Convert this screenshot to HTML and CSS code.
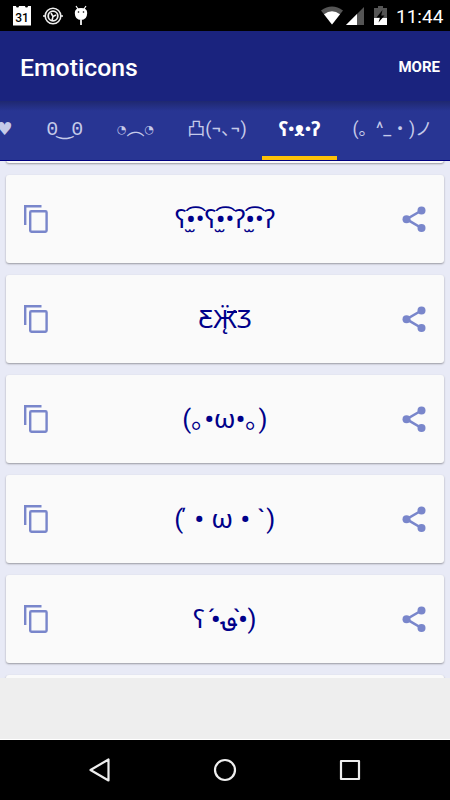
FILE: index.html
```html
<!DOCTYPE html>
<html lang="en">
<head>
    <meta charset="UTF-8">
    <meta name="viewport" content="width=device-width, initial-scale=1.0">
    <title>Emoticons</title>
    <link rel="stylesheet" href="styles.css">
</head>
<body>
    <svg width="0" height="0" class="defs">
        <symbol id="copy" viewBox="0 0 24 28">
            <path d="M1.2 20V1.2H17.5" fill="none" stroke="currentColor" stroke-width="2.4"/>
            <rect x="6.2" y="6.3" width="16.4" height="20.4" rx="1.2" fill="none" stroke="currentColor" stroke-width="2.4"/>
        </symbol>
        <symbol id="share" viewBox="0 0 24 26">
            <path d="M19.5 4.5L4.5 13.2l15 8.8" fill="none" stroke="currentColor" stroke-width="2.6"/>
            <circle cx="19.5" cy="4.5" r="4" fill="currentColor"/>
            <circle cx="4.5" cy="13.2" r="4" fill="currentColor"/>
            <circle cx="19.5" cy="22" r="4" fill="currentColor"/>
        </symbol>
    </svg>

    <div class="status-bar">
        <div class="notifications">
            <svg width="20" height="21" viewBox="0 0 20 21">
                <path d="M1 1h3a1.5 1.5 0 0 0 3 0h6a1.5 1.5 0 0 0 3 0h3v19.5H1z" fill="#fff"/>
                <text x="10" y="16.5" class="calendar-day">31</text>
            </svg>
            <svg width="20" height="20" viewBox="0 0 20 20" fill="none" stroke="#eee">
                <circle cx="10" cy="10" r="7.8" stroke-width="1.6"/>
                <circle cx="10" cy="10" r="4.8" stroke-width="1.8"/>
                <path d="M0 10h3M17 10h3M8 7l2 3.5M9 14.5l1-4 3-1.5" stroke-width="1.6"/>
            </svg>
            <svg width="14" height="21" viewBox="0 0 14 21">
                <path d="M2 1l2 3M12 1l-2 3" stroke="#fff" stroke-width="1.2"/>
                <path d="M.8 8Q.8 3 7 3t6.2 5Q13 15 7 15T.8 8z" fill="#fff"/>
                <path d="M7 15v5" stroke="#ddd" stroke-width="2"/>
                <circle cx="4.5" cy="7" r=".8"/><circle cx="9.5" cy="7" r=".8"/>
            </svg>
        </div>
        <div class="system">
            <svg width="22" height="19" viewBox="0 0 22 19">
                <path d="M0 4.5Q11-3.5 22 4.5L11 18.5z" fill="#555"/>
                <path d="M3 8.2Q11 2.2 19 8.2L11 18.5z" fill="#fff"/>
            </svg>
            <svg class="signal" width="18" height="18" viewBox="0 0 18 18">
                <path d="M0 18L18 0v18z" fill="#555"/>
                <path d="M0 18L11 7v11z" fill="#fff"/>
            </svg>
            <svg class="battery" width="13" height="19" viewBox="0 0 13 19">
                <path d="M0 2h4V0h5v2h4v10H0z" fill="#555"/>
                <path d="M0 12h13v7H0z" fill="#fff"/>
                <path d="M8.5 4L2.5 11.5H6L4.5 16.5l6-7H7.2z" fill="#000"/>
            </svg>
            <span class="clock">11:44</span>
        </div>
    </div>

    <header class="app-bar">
        <h1>Emoticons</h1>
        <span class="more">MORE</span>
    </header>

    <nav class="tabs">
        <a class="tab tab-love">♥</a>
        <a class="tab tab-happy">0‿0</a>
        <a class="tab tab-sad"><span class="eye">◔</span>︵<span class="eye">◔</span></a>
        <a class="tab tab-angry">凸(¬､¬)</a>
        <a class="tab tab-animals active">ʕ•ᴥ•ʔ</a>
        <a class="tab tab-other">(。^_・)ノ</a>
    </nav>

    <main class="list">
        <div class="card card-first"></div>
        <div class="card">
            <svg class="copy"><use href="#copy"/></svg>
            <span class="face">ʕ<span class="mark mouth">&nbsp;̫</span>•͡•ʕ<span class="mark mouth">&nbsp;̫</span>•͡•ʔ<span class="mark mouth">&nbsp;̫</span>•͡•ʔ</span>
            <svg class="share"><use href="#share"/></svg>
        </div>
        <div class="card">
            <svg class="copy"><use href="#copy"/></svg>
            <span class="face">Ƹ̵<span class="wing">Ӝ̨</span>Ʒ</span>
            <svg class="share"><use href="#share"/></svg>
        </div>
        <div class="card">
            <svg class="copy"><use href="#copy"/></svg>
            <span class="face puppy">(｡<b>•</b>ω<b>•</b>｡)</span>
            <svg class="share"><use href="#share"/></svg>
        </div>
        <div class="card">
            <svg class="copy"><use href="#copy"/></svg>
            <span class="face seal"><span class="brow">(</span>΄ <b>•</b> ω <b>•</b> `)</span>
            <svg class="share"><use href="#share"/></svg>
        </div>
        <div class="card">
            <svg class="copy"><use href="#copy"/></svg>
            <span class="face duck">ʕ <span class="mark">&nbsp;́</span><b>•</b><bdi class="beak">؈</bdi><span class="mark">&nbsp;̀</span><b>•</b>)</span>
            <svg class="share"><use href="#share"/></svg>
        </div>
        <div class="card"></div>
    </main>

    <div class="ad-space"></div>

    <footer class="nav-bar">
        <svg width="24" height="26" viewBox="0 0 24 26"><path d="M2.5 13L20.5 2.5v21z"/></svg>
        <svg width="24" height="26" viewBox="0 0 24 26"><circle cx="12" cy="13" r="10"/></svg>
        <svg width="24" height="26" viewBox="0 0 24 26"><path d="M3 4h18v18H3z"/></svg>
    </footer>
</body>
</html>
```

FILE: styles.css
```css
:root {
    --indigo-dark: #1a237e;
    --indigo: #283593;
    --indigo-pale: #e8eaf6;
    --icon: #7986cb;
    --face: #000089;
    --accent: #ffc107;
}

* {
    box-sizing: border-box;
}

body {
    margin: 0;
    width: 450px;
    height: 800px;
    overflow: hidden;
    display: flex;
    flex-direction: column;
    background-color: #eee;
    font-family: Roboto, "Noto Sans", "DejaVu Sans", "Noto Sans CJK JP", sans-serif;
}

.defs {
    position: absolute;
}

.status-bar {
    flex: none;
    height: 31px;
    padding: 0 10px 0 12px;
    background-color: #000;
    display: flex;
    justify-content: space-between;
    align-items: center;
}

.notifications,
.system {
    display: flex;
    align-items: center;
}

.notifications {
    gap: 11px;
}

.calendar-day {
    font-size: 12px;
    font-weight: 500;
    text-anchor: middle;
}

.signal {
    margin-left: 3px;
}

.battery {
    margin: 0 9px 0 10px;
}

.clock {
    color: #fff;
    font-size: 19px;
    line-height: 31px;
    padding-top: 1px;
    width: 44px;
    white-space: nowrap;
}

.app-bar {
    flex: none;
    height: 70px;
    padding: 2px 10px 0 20px;
    background-color: var(--indigo-dark);
    color: #fff;
    display: flex;
    justify-content: space-between;
    align-items: center;
}

.app-bar h1 {
    margin: 0;
    font-size: 24.8px;
    font-weight: 500;
}

.more {
    font-size: 15px;
    font-weight: 700;
}

.tabs {
    flex: none;
    height: 60px;
    display: flex;
    background: linear-gradient(#1f2870, var(--indigo) 10px);
    border-bottom: 1px solid #000080;
    overflow: hidden;
}

.tab {
    flex: none;
    height: 60px;
    line-height: 56px;
    color: #c5cae9;
    font-size: 18px;
    text-align: center;
    white-space: nowrap;
}

.tab-love {
    width: 49px;
    margin-left: -20px;
    font-family: "DejaVu Sans", sans-serif;
}

.tab-happy {
    width: 70px;
    font-family: "Liberation Mono", "DejaVu Sans", monospace;
    font-size: 20px;
    letter-spacing: -1.5px;
    line-height: 58px;
}

.tab-sad {
    width: 73px;
}

.eye {
    font-size: 11px;
    font-weight: 700;
    vertical-align: 2px;
}

.tab-angry {
    width: 90px;
}

.tab-animals {
    width: 75px;
    font-size: 19px;
    line-height: 58px;
}

.tab-other {
    width: 111px;
    font-size: 17.6px;
}

.active {
    color: #fff;
    font-weight: 700;
    height: 59px;
    border-bottom: 4px solid var(--accent);
}

.list {
    height: 517px;
    flex: none;
    overflow: hidden;
    padding: 0 6px;
    background-color: var(--indigo-pale);
    display: flex;
    flex-direction: column;
    gap: 12px;
}

.card {
    flex: none;
    height: 88px;
    padding: 0 18px 1px;
    border-radius: 3px;
    background-color: #fafafa;
    box-shadow: 0 1px 2px rgba(0, 0, 0, 0.35);
    display: flex;
    align-items: center;
    justify-content: space-between;
}

.card-first {
    margin-top: -86px;
}

.copy {
    width: 24px;
    height: 28px;
    color: var(--icon);
}

.share {
    width: 24px;
    height: 26px;
    color: var(--icon);
}

.face {
    color: var(--face);
    font-size: 26px;
    line-height: 30px;
    white-space: nowrap;
}

/* accents that sit beside a dot without taking up width */
.mark {
    display: inline-block;
    width: 0;
}

.mouth {
    margin: 0 3px 0 -3px;
}

/* bar across the top of the right wing */
.wing {
    position: relative;
}

.wing::after {
    content: "";
    position: absolute;
    top: 7px;
    right: 0;
    width: 10px;
    height: 2px;
    background-color: var(--face);
}

.puppy {
    letter-spacing: 0.2px;
}

.seal {
    letter-spacing: 0.6px;
}

.brow {
    letter-spacing: -3px;
}

.beak {
    font-size: 24px;
    margin: 0 2px;
    vertical-align: 2px;
}

.nav-bar {
    flex: none;
    height: 60px;
    background-color: #000;
    display: flex;
    justify-content: center;
    align-items: center;
    gap: 101px;
}

.nav-bar svg {
    fill: none;
    stroke: #eee;
    stroke-width: 2.2;
    stroke-linejoin: round;
}

.ad-space {
    flex: none;
    height: 62px;
    border-bottom: 1px solid #fff;
}
```
